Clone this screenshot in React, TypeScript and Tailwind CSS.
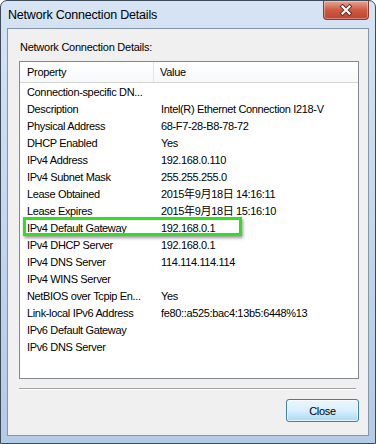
import React from "react";

const rows: [string, string][] = [
  ["Connection-specific DN...", ""],
  ["Description", "Intel(R) Ethernet Connection I218-V"],
  ["Physical Address", "68-F7-28-B8-78-72"],
  ["DHCP Enabled", "Yes"],
  ["IPv4 Address", "192.168.0.110"],
  ["IPv4 Subnet Mask", "255.255.255.0"],
  ["Lease Obtained", "2015年9月18日 14:16:11"],
  ["Lease Expires", "2015年9月18日 15:16:10"],
  ["IPv4 Default Gateway", "192.168.0.1"],
  ["IPv4 DHCP Server", "192.168.0.1"],
  ["IPv4 DNS Server", "114.114.114.114"],
  ["IPv4 WINS Server", ""],
  ["NetBIOS over Tcpip En...", "Yes"],
  ["Link-local IPv6 Address", "fe80::a525:bac4:13b5:6448%13"],
  ["IPv6 Default Gateway", ""],
  ["IPv6 DNS Server", ""],
];

const font = { fontFamily: '"Liberation Sans", "Noto Sans CJK SC", sans-serif' };

export default function App() {
  return (
    <div
      className="w-[376px] h-[444px] flex flex-col rounded-t-[7px] border border-[#3d4a5a] bg-gradient-to-b from-[#d6e4f4] via-[#c3d7ee] to-[#b3cbe7] text-black overflow-hidden"
      style={font}
    >
      {/* title bar */}
      <div className="h-[27px] flex items-start justify-between shrink-0">
        <div className="pl-[7px] pt-[7px] text-[12.5px] leading-[15px] tracking-[-0.2px] text-black">Network Connection Details</div>
        <div className="mr-[6px] w-[46px] h-[19px] rounded-b-[4px] border border-t-0 border-[#8a3a2e] bg-gradient-to-b from-[#e4a494] via-[#cf5a42] to-[#c0442e] flex items-center justify-center shadow-[inset_0_0_0_1px_rgba(255,255,255,0.35)]">
          <svg width="14" height="12" viewBox="0 0 14 12">
            <path d="M3.5 2.5 L10.5 9.5 M10.5 2.5 L3.5 9.5" stroke="#5a2a24" strokeWidth="4" strokeLinecap="square" />
            <path d="M3.5 2.5 L10.5 9.5 M10.5 2.5 L3.5 9.5" stroke="#ffffff" strokeWidth="2.2" strokeLinecap="square" />
          </svg>
        </div>
      </div>

      {/* client */}
      <div className="mx-[6px] mb-[7px] flex-1 flex flex-col border border-[#8595a8] bg-[#f0f0f0] pt-[11px] pl-[11px] pr-[9px]">
        <div className="pl-[1px] text-[11px] leading-[15px] tracking-[-0.25px]">Network Connection Details:</div>
        <div className="mt-[6px] h-[318px] border border-[#828790] bg-white flex flex-col">
          <div className="h-[21px] flex border-b border-[#d5d5d5] bg-gradient-to-b from-white to-[#f7f8fa] text-[11px] leading-[20px] tracking-[-0.3px]">
            <div className="w-[134px] pl-[7px] border-r border-[#e3e5e8]">Property</div>
            <div className="pl-[6px]">Value</div>
          </div>
          <div className="pt-[1px] flex flex-col">
            {rows.map(([k, v], i) => (
              <div key={i} className="relative h-[17px] flex text-[11px] leading-[17px] tracking-[-0.35px]">
                <div className="w-[135px] pl-[7px] whitespace-nowrap overflow-hidden">{k}</div>
                <div className="pl-[6px] whitespace-nowrap">{v}</div>
                {i === 8 && (
                  <div className="absolute left-[3px] top-[-3px] w-[219px] h-[19px] border-[3px] border-[#2fe022] shadow-[1px_2px_3px_rgba(0,0,0,0.4)]" />
                )}
              </div>
            ))}
          </div>
        </div>
        <div className="mt-[9px] mr-[3px] h-[2px] border-t border-[#a0a0a0] border-b border-b-white" />
        <div className="mt-[9px] flex justify-end">
          <button className="w-[73px] h-[23px] rounded-[3px] border border-[#3c7fb1] bg-gradient-to-b from-[#eaf6fd] via-[#d9f0fc] to-[#a7d9f5] shadow-[inset_0_0_0_1px_rgba(255,255,255,0.7)] text-[11px] leading-[20px] tracking-[-0.3px] text-black">
            Close
          </button>
        </div>
      </div>
    </div>
  );
}
